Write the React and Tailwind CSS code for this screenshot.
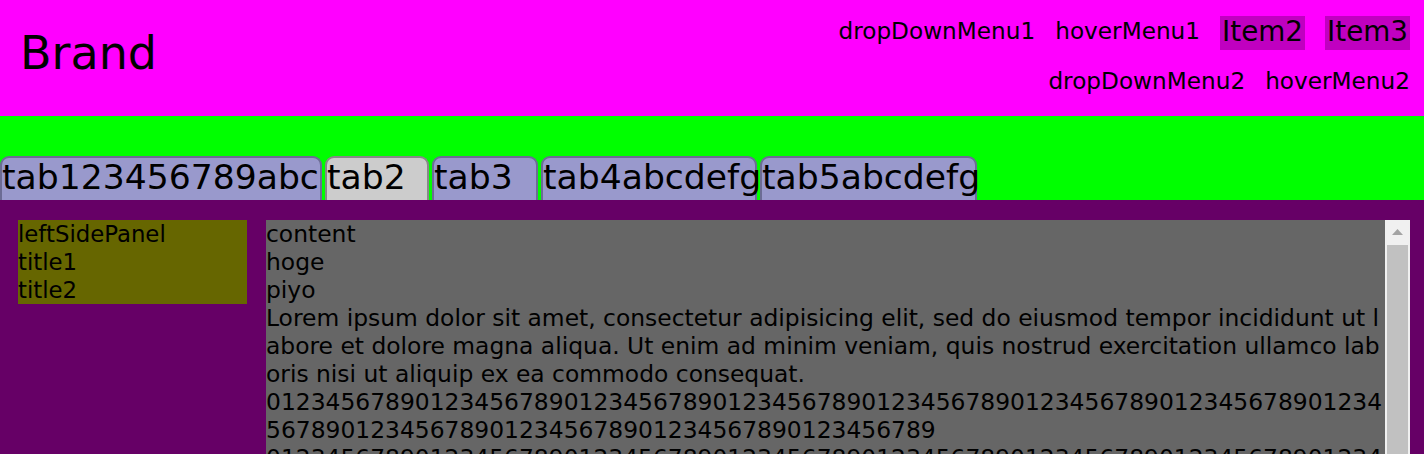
export default function App() {
  const digits = "0123456789".repeat(12);
  const tabs = [
    { label: "tab123456789abc", w: "w-[322px]", active: false },
    { label: "tab2", w: "w-[104px]", active: true },
    { label: "tab3", w: "w-[106px]", active: false },
    { label: "tab4abcdefg", w: "w-[216px]", active: false },
    { label: "tab5abcdefg", w: "w-[217px]", active: false },
  ];
  return (
    <div className="font-['DejaVu_Sans',sans-serif] text-black min-h-screen bg-[#660066] overflow-hidden h-[454px]">
      <header className="h-[116px] bg-[#ff00ff] flex justify-between">
        <div className="pl-[20px] flex items-center text-[46px] leading-none pb-[10px]">Brand</div>
        <nav className="pt-[16px] pr-[14px] flex flex-col items-end gap-[17px]">
          <div className="flex items-center gap-[20px] h-[34px] text-[23.2px]">
            <span className="pb-[4px]">dropDownMenu1</span>
            <span className="pb-[4px]">hoverMenu1</span>
            <span className="bg-[#c000c0] px-[2px] h-[34px] leading-[32px] text-[27.8px]">Item2</span>
            <span className="bg-[#c000c0] px-[2px] h-[34px] leading-[32px] text-[27.8px]">Item3</span>
          </div>
          <div className="flex items-center gap-[20px] h-[28px] leading-[28px] text-[23.2px]">
            <span>dropDownMenu2</span>
            <span>hoverMenu2</span>
          </div>
        </nav>
      </header>
      <div className="h-[84px] bg-[#00ff00] flex items-end gap-[3px]">
        {tabs.map((t) => (
          <div
            key={t.label}
            className={
              "h-[44px] shrink-0 border-2 border-b-0 rounded-t-[9px] text-[34.6px] leading-[38px] whitespace-nowrap overflow-visible " +
              t.w +
              (t.active ? " bg-[#cccccc] border-[#888888]" : " bg-[#9999cc] border-[#6c6c94]")
            }
          >
            {t.label}
          </div>
        ))}
      </div>
      <main className="flex pt-[20px] pl-[18px] pr-[14px]">
        <aside className="w-[229px] shrink-0 self-start bg-[#666600] text-[22.8px] leading-[28px]">
          <div>leftSidePanel</div>
          <div>title1</div>
          <div>title2</div>
        </aside>
        <div className="ml-[19px] flex-1 flex h-[400px]">
          <div className="flex-1 bg-[#666666] text-[23.4px] leading-[28px] break-all overflow-hidden">
            <div>content</div>
            <div>hoge</div>
            <div>piyo</div>
            <div>
              Lorem ipsum dolor sit amet, consectetur adipisicing elit, sed do eiusmod tempor incididunt ut labore et dolore magna aliqua. Ut enim ad minim veniam, quis nostrud exercitation ullamco laboris nisi ut aliquip ex ea commodo consequat.
            </div>
            <div>{digits}</div>
            <div>{digits}</div>
            <div>{digits}</div>
          </div>
          <div className="w-[25px] shrink-0 bg-[#f0f0f0] flex flex-col">
            <div className="h-[25px] flex items-center justify-center pb-[2px]">
              <svg width="11" height="6" viewBox="0 0 11 6">
                <polygon points="5.5,0 11,6 0,6" fill="#a3a3a3" />
              </svg>
            </div>
            <div className="flex-1 mx-[2px] bg-[#c1c1c1]" />
          </div>
        </div>
      </main>
    </div>
  );
}
